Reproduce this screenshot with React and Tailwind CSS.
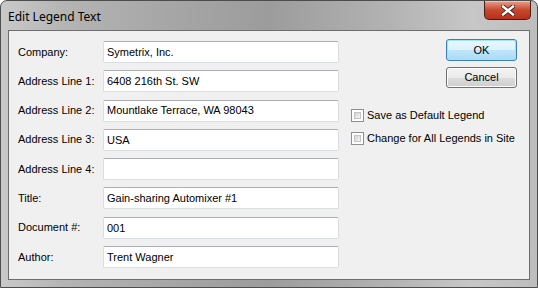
import React from 'react';

const fields = [
  { label: 'Company:', value: 'Symetrix, Inc.' },
  { label: 'Address Line 1:', value: '6408 216th St. SW' },
  { label: 'Address Line 2:', value: 'Mountlake Terrace, WA 98043' },
  { label: 'Address Line 3:', value: 'USA' },
  { label: 'Address Line 4:', value: '' },
  { label: 'Title:', value: 'Gain-sharing Automixer #1' },
  { label: 'Document #:', value: '001' },
  { label: 'Author:', value: 'Trent Wagner' },
];

const CheckBox = ({ label }) => (
  <label className="flex items-center h-[13px] gap-[3px]">
    <span className="w-[13px] h-[13px] border border-[#8e8f8f] bg-white p-[2px] shrink-0">
      <span className="block w-full h-full bg-gradient-to-br from-[#d2d2d2] to-[#f6f6f6] border border-[#c4c4c4]" />
    </span>
    <span className="leading-none">{label}</span>
  </label>
);

const CloseButton = () => (
  <div className="w-[47px] h-[19px] rounded-b-[5px] border border-t-0 border-[#4a1c14] bg-gradient-to-b from-[#e6a08c] via-[#c6472c] to-[#b8301c] flex items-center justify-center shadow-[inset_0_1px_0_rgba(255,255,255,0.4)]">
    <svg width="14" height="11" viewBox="0 0 14 11">
      <path d="M2 1.5 L12 9.5 M12 1.5 L2 9.5" stroke="#3a2420" strokeWidth="4.2" strokeLinecap="square" />
      <path d="M2 1.5 L12 9.5 M12 1.5 L2 9.5" stroke="#ffffff" strokeWidth="2.4" strokeLinecap="square" />
    </svg>
  </div>
);

export default function App() {
  return (
    <div className="w-[538px] h-[288px] rounded-t-[7px] border border-[#4d4d4d] bg-[linear-gradient(90deg,#c9c9c9_0%,#b4b4b4_12%,#a7a7a7_30%,#9c9c9c_50%,#b2b2b2_72%,#c7c7c7_88%,#bdbdbd_100%)] flex flex-col overflow-hidden" style={{ fontFamily: '"Liberation Sans", Arial, sans-serif' }}>
      {/* Title bar */}
      <div className="h-[29px] flex items-start justify-between pl-[7px] pr-[6px]">
        <span className="pt-[7px] text-[12px] text-black" style={{ fontFamily: '"Noto Sans", "Open Sans", sans-serif' }}>Edit Legend Text</span>
        <CloseButton />
      </div>

      {/* Client area */}
      <div className="mx-[7px] h-[250px] border border-[#6d6d6d] bg-[#f0f0f0] flex text-[11px] text-black">
        <div className="pl-[9px] pt-[10px] grid grid-cols-[85px_236px] gap-y-[7.3px] items-center content-start">
          {fields.map((f) => (
            <React.Fragment key={f.label}>
              <span className="leading-none">{f.label}</span>
              <div className="h-[22px] bg-white border border-[#dadde2] border-t-[#abadb3] rounded-[2px] flex items-center pl-[3px]">
                {f.value}
              </div>
            </React.Fragment>
          ))}
        </div>

        <div className="ml-[12px] pt-[8px] w-[166px] flex flex-col">
          <button className="ml-[95px] w-[71px] h-[22px] rounded-[3px] border border-[#3c7fb1] bg-[linear-gradient(#ebf7fd_0%,#dcf1fc_50%,#bfe6fb_51%,#a9daf5_100%)] shadow-[inset_0_0_0_1px_#9fe4fb]">OK</button>
          <button className="ml-[95px] mt-[6px] w-[71px] h-[21px] rounded-[3px] border border-[#707070] bg-[linear-gradient(#f2f2f2_0%,#ebebeb_50%,#dddddd_51%,#cfcfcf_100%)] shadow-[inset_0_0_0_1px_#fcfcfc]">Cancel</button>
          <div className="mt-[21px] flex flex-col gap-[10px]">
            <CheckBox label="Save as Default Legend" />
            <CheckBox label="Change for All Legends in Site" />
          </div>
        </div>
      </div>
    </div>
  );
}
